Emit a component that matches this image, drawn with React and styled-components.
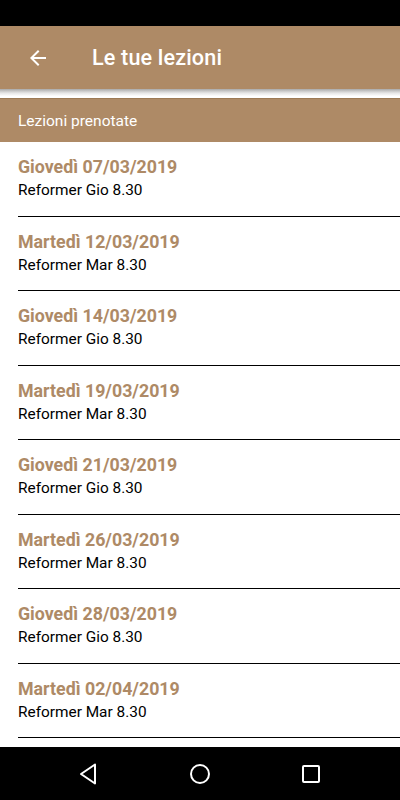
import React from "react";
import styled, { createGlobalStyle } from "styled-components";

const GlobalStyle = createGlobalStyle`
  html, body {
    margin: 0;
    padding: 0;
    background: #fff;
    font-family: Roboto, "Liberation Sans", sans-serif;
  }
  body { overflow: hidden; }
`;

const Screen = styled.div`
  width: 400px;
  height: 800px;
  display: flex;
  flex-direction: column;
  background: #fff;
  overflow: hidden;
`;

const StatusBar = styled.div`
  height: 26px;
  flex-shrink: 0;
  background: #000;
`;

const AppBar = styled.div`
  height: 63px;
  flex-shrink: 0;
  background: #ae8a66;
  display: flex;
  align-items: center;
  padding-left: 26px;
  gap: 42px;
`;

const BackButton = styled.button`
  width: 24px;
  height: 24px;
  padding: 0;
  border: none;
  background: transparent;
  display: flex;
  align-items: center;
  justify-content: center;
`;

const Title = styled.h1`
  margin: 0;
  color: #fff;
  font-size: 21.6px;
  font-weight: 500;
  letter-spacing: 0.15px;
`;

const Shadow = styled.div`
  height: 9px;
  flex-shrink: 0;
  background: linear-gradient(#a9a9a9, #e6e6e6 45%, #fff 80%);
`;

const SectionHeader = styled.div`
  height: 44px;
  flex-shrink: 0;
  background: #ae8a66;
  border-top: 1px solid #9c7a55;
  box-sizing: border-box;
  display: flex;
  align-items: center;
  padding-left: 18px;
  color: #fff;
  font-size: 15.5px;
`;

const List = styled.div`
  flex: 1;
  overflow: hidden;
`;

const Item = styled.div`
  height: 74.5px;
  box-sizing: border-box;
  margin-left: 18px;
  padding-top: 14px;
  border-bottom: 1px solid #000;
`;

const ItemDate = styled.div`
  color: #ae8a66;
  font-size: 17.8px;
  font-weight: 700;
  line-height: 22px;
`;

const ItemName = styled.div`
  margin-top: 2px;
  color: #000;
  font-size: 15.4px;
  line-height: 20px;
`;

const NavBar = styled.div`
  height: 53px;
  flex-shrink: 0;
  background: #000;
  display: flex;
  align-items: center;
  justify-content: center;
  gap: 87px;
`;

const NavIcon = styled.svg`
  width: 24px;
  height: 24px;
  display: block;
`;

const lessons = [
  ["Giovedì 07/03/2019", "Reformer Gio 8.30"],
  ["Martedì 12/03/2019", "Reformer Mar 8.30"],
  ["Giovedì 14/03/2019", "Reformer Gio 8.30"],
  ["Martedì 19/03/2019", "Reformer Mar 8.30"],
  ["Giovedì 21/03/2019", "Reformer Gio 8.30"],
  ["Martedì 26/03/2019", "Reformer Mar 8.30"],
  ["Giovedì 28/03/2019", "Reformer Gio 8.30"],
  ["Martedì 02/04/2019", "Reformer Mar 8.30"],
];

export default function App() {
  return (
    <Screen>
      <GlobalStyle />
      <StatusBar />
      <AppBar>
        <BackButton aria-label="back">
          <svg width="24" height="24" viewBox="0 0 24 24">
            <path
              d="M20 11H7.83l5.59-5.59L12 4l-8 8 8 8 1.41-1.41L7.83 13H20v-2z"
              fill="#fff"
            />
          </svg>
        </BackButton>
        <Title>Le tue lezioni</Title>
      </AppBar>
      <Shadow />
      <SectionHeader>Lezioni prenotate</SectionHeader>
      <List>
        {lessons.map(([date, name], i) => (
          <Item key={i}>
            <ItemDate>{date}</ItemDate>
            <ItemName>{name}</ItemName>
          </Item>
        ))}
      </List>
      <NavBar>
        <NavIcon viewBox="0 0 24 24">
          <path d="M18 2.5 L4 12 L18 21.5 Z" fill="none" stroke="#fff" strokeWidth="2" strokeLinejoin="round" />
        </NavIcon>
        <NavIcon viewBox="0 0 24 24">
          <circle cx="12" cy="12" r="9" fill="none" stroke="#fff" strokeWidth="2" />
        </NavIcon>
        <NavIcon viewBox="0 0 24 24">
          <rect x="4" y="4" width="16" height="16" rx="1" fill="none" stroke="#fff" strokeWidth="2" />
        </NavIcon>
      </NavBar>
    </Screen>
  );
}
